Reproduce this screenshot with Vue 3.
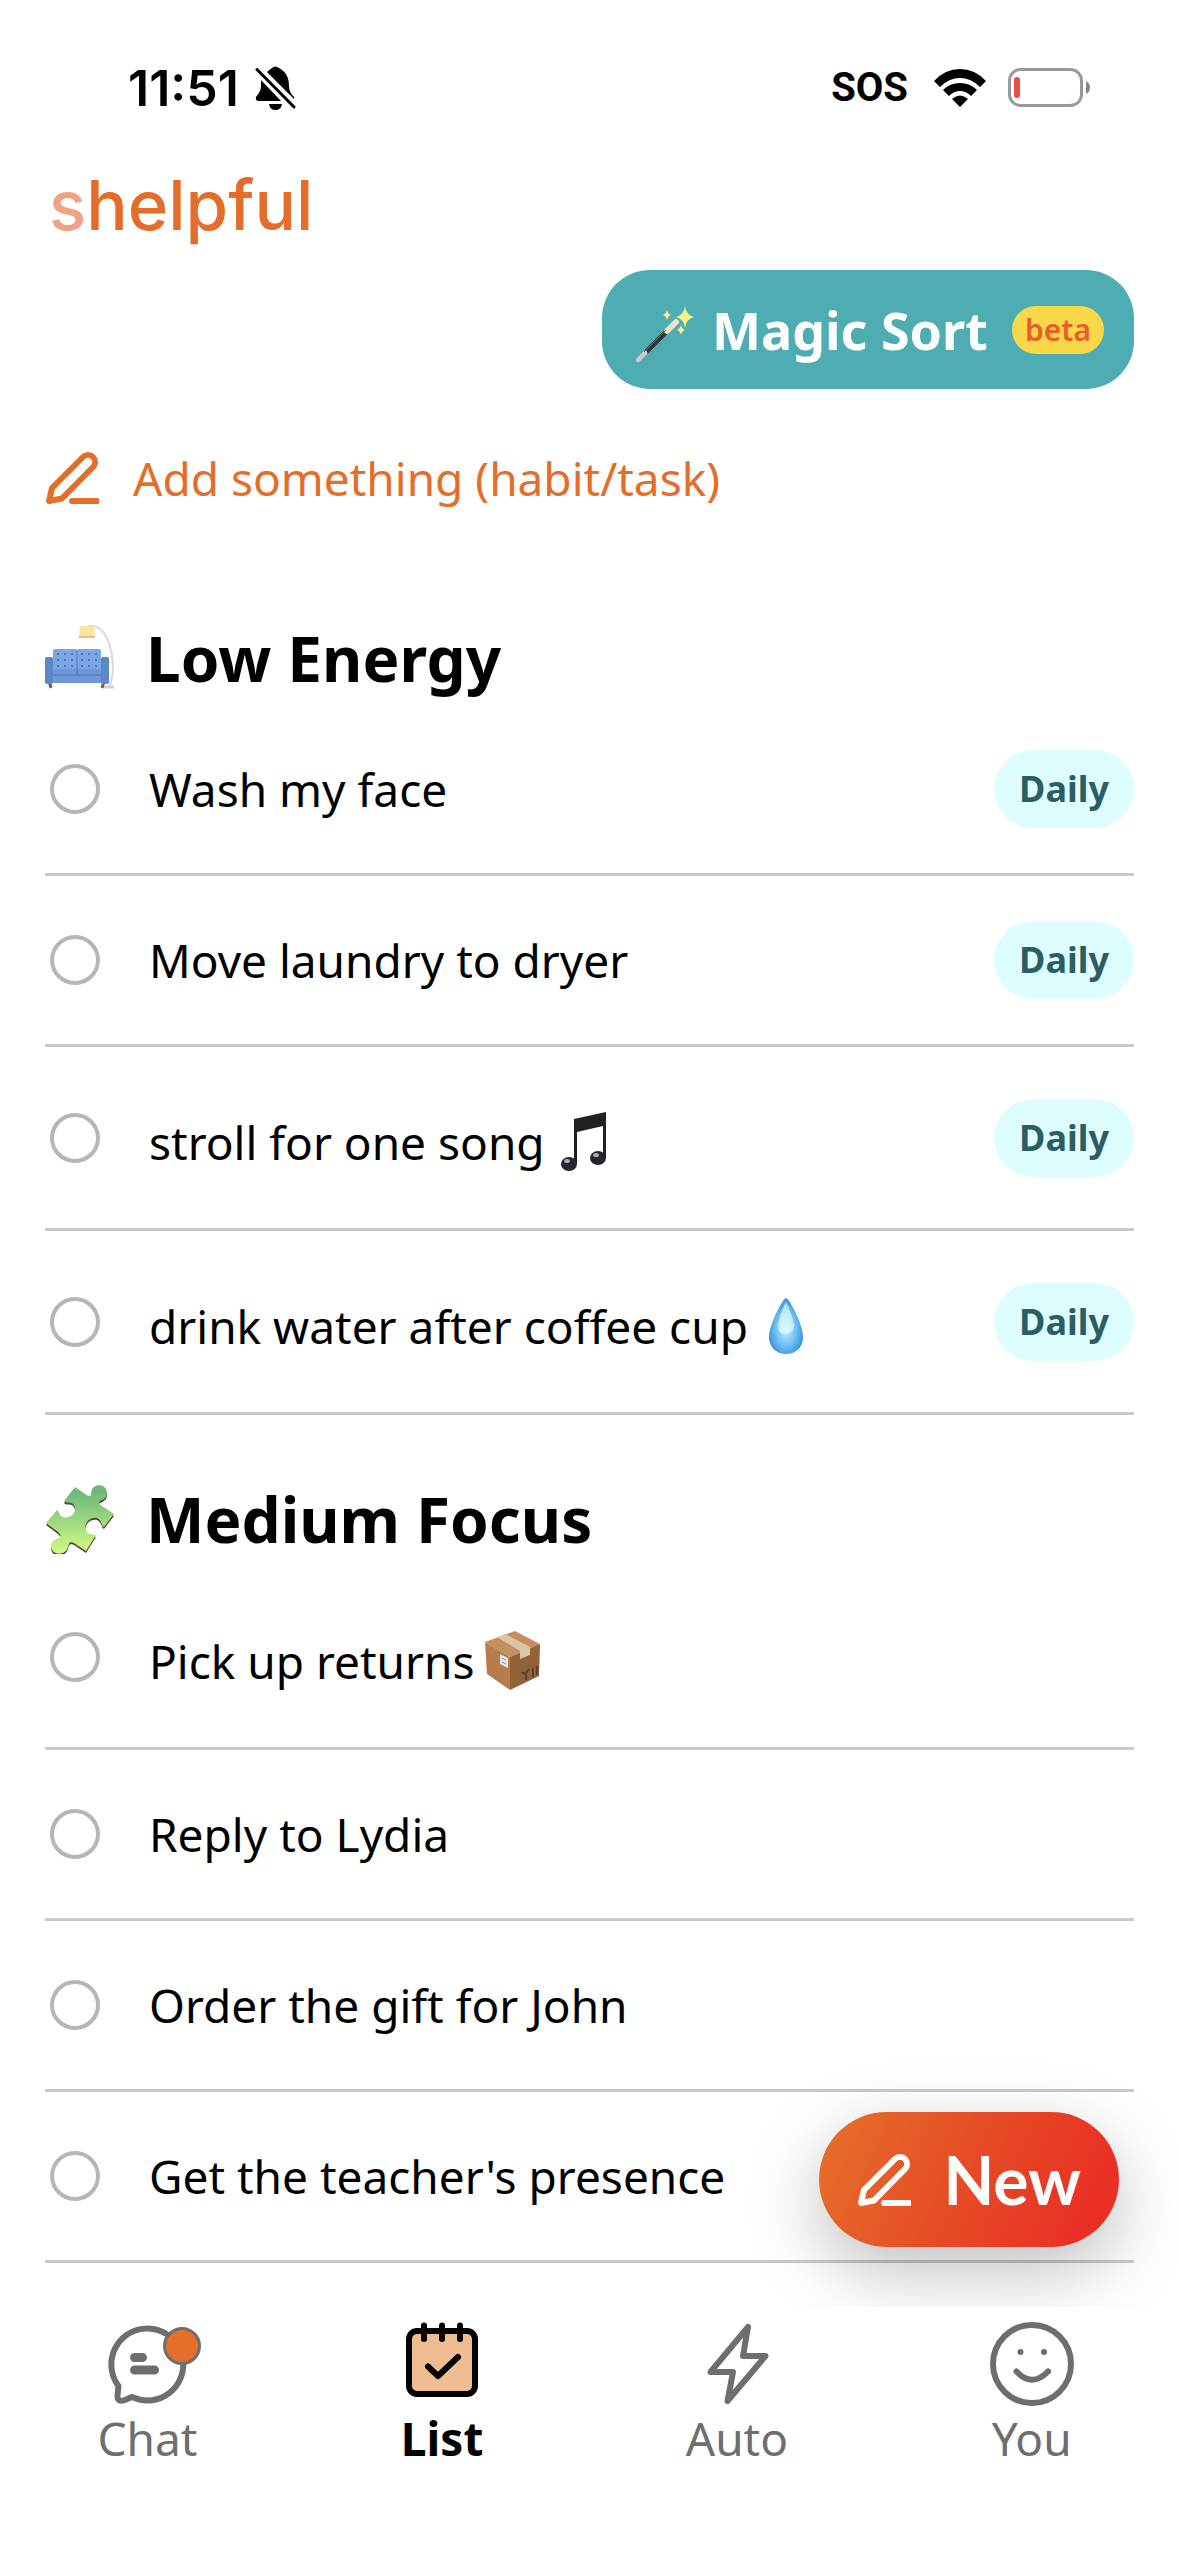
<script setup>
import { ref } from 'vue'

const sections = ref([
  {
    title: 'Low Energy',
    icon: 'sofa',
    tasks: [
      { id: 'wash', text: 'Wash my face', tag: 'Daily', done: false },
      { id: 'laundry', text: 'Move laundry to dryer', tag: 'Daily', done: false },
      { id: 'stroll', text: 'stroll for one song', emoji: 'notes', tag: 'Daily', done: false },
      { id: 'water', text: 'drink water after coffee cup', emoji: 'drop', tag: 'Daily', done: false },
    ],
  },
  {
    title: 'Medium Focus',
    icon: 'puzzle',
    tasks: [
      { id: 'returns', text: 'Pick up returns', emoji: 'box', done: false },
      { id: 'reply', text: 'Reply to Lydia', done: false },
      { id: 'gift', text: 'Order the gift for John', done: false },
      { id: 'teacher', text: "Get the teacher's presence", done: false },
    ],
  },
])

const tabs = [
  { name: 'Chat' },
  { name: 'List', active: true },
  { name: 'Auto' },
  { name: 'You' },
]
</script>

<template>
  <div class="app">
    <div class="screen">
      <header class="status">
        <span class="time">11:51</span>
        <svg class="bell" viewBox="0 0 42 44" width="42" height="44" aria-hidden="true">
          <path d="M12 6C14 4 16 3 17 2Q20 -1 24 2C31 6 34 11 34 20C34 25 36 28 39 31V33Z" />
          <path d="M6 14L26 35H4Q0 35 1 31C4 27 6 25 6 19Z" />
          <path d="M14 38H27Q26 44 20.500 44T14 38Z" />
          <path d="M2 3.500L39 41" fill="none" stroke="#000" stroke-width="3" stroke-linecap="round" />
        </svg>
        <span class="sos">SOS</span>
        <svg class="wifi" viewBox="0 0 52 38" width="52" height="38" aria-hidden="true">
          <path d="M0 12Q11 0 26 0T52 12L46 18Q37 9 26 9T6 18Z" />
          <path d="M9 21Q16 14 26 14T43 21L37 27Q32 22 26 22T15 27Z" />
          <path d="M18 30Q26 23 34 30L26 38Z" />
        </svg>
        <svg class="battery" viewBox="0 0 84 40" width="84" height="40" aria-hidden="true">
          <rect x="1.500" y="1.500" width="72" height="36" rx="11" fill="none" stroke="#999" stroke-width="3" />
          <rect x="6" y="9" width="6" height="21" rx="3" fill="#ee4b45" />
          <path d="M78 13Q82 15 82 19.500T78 26Z" fill="#888" />
        </svg>
      </header>

      <main class="content">
        <h1 class="logo"><span>s</span>helpful</h1>

        <button class="magic" type="button">
          <svg viewBox="0 0 62 58" width="62" height="58" aria-hidden="true">
            <path d="M4 54L42 16" stroke="#353535" stroke-width="5" stroke-linecap="round" />
            <path d="M4 54L11 47" stroke="#c9c9cf" stroke-width="5" stroke-linecap="round" />
            <path d="M33 25L42 16" stroke="#f2e2bd" stroke-width="6" stroke-linecap="round" />
            <path d="M10 46L32 24" stroke="#6b6b6b" stroke-width="1" />
            <path d="M51 0Q52 9 60 11Q52 13 51 22Q50 13 42 11Q50 9 51 0ZM33 4Q34 8 37 9Q34 10 33 14Q32 10 29 9Q32 8 33 4ZM47 19Q48 23 51 24Q48 25 47 29Q46 25 43 24Q46 23 47 19Z" fill="#fdf38a" />
          </svg>
          <span class="magic-label">Magic Sort</span>
          <span class="beta">beta</span>
        </button>

        <button class="add" type="button">
          <svg viewBox="0 0 54 54" width="54" height="54" aria-hidden="true">
            <path d="M4 50L7 37L38 6A7 7 0 0 1 48 16L17 47.500Z M27 50H52" />
          </svg>
          <span>Add something (habit/task)</span>
        </button>

        <section v-for="section in sections" :key="section.title" class="group">
          <h2>
            <svg v-if="section.icon === 'sofa'" viewBox="0 0 70 70" width="70" height="70" aria-hidden="true">
              <path d="M43 3C60 1 68 22 68 48Q67 58 64 64" fill="none" stroke="#d9d9d9" stroke-width="2" />
              <path d="M59 64H69" stroke="#cfcfcf" stroke-width="3" />
              <path d="M35 3H49L50 15H34Z" fill="#fbe3a4" />
              <path d="M34 14H50" stroke="#e3c27c" stroke-width="2" />
              <path d="M4 58L6 65M59 58L57 65" stroke="#85563c" stroke-width="3" />
              <rect x="8" y="26" width="24" height="26" rx="2" fill="#7ba5e3" />
              <rect x="32" y="26" width="24" height="26" rx="2" fill="#7ba5e3" />
              <path d="M12 31H29M12 37H29M12 43H29M36 31H53M36 37H53M36 43H53" stroke="#4f77b4" stroke-width="2" stroke-dasharray="2 5" />
              <path d="M32 27V50" stroke="#5580c0" stroke-width="1" />
              <rect x="7" y="46" width="50" height="14" fill="#6c97d8" />
              <path d="M7 52H57M32 46V52" stroke="#4b73b0" stroke-width="1" />
              <rect x="0" y="34" width="8" height="27" rx="2" fill="#5c88cb" />
              <rect x="56" y="34" width="8" height="27" rx="2" fill="#5c88cb" />
            </svg>
            <svg v-else viewBox="0 0 70 70" width="70" height="70" aria-hidden="true">
              <defs>
                <linearGradient id="puzzleFill" x1="0" y1="0" x2="0" y2="1">
                  <stop offset="0.100" stop-color="#6fb87c" />
                  <stop offset="1" stop-color="#d3fb84" />
                </linearGradient>
                <path id="piece" d="M30 3L43 12C47 13 46 9 46.500 7C48 -1 62 -1 62 9C62 14 58 16 55 17C53 19 55 21 57 22L69 30L59 43C56 42 57 36 52 34C44 32 37 42 42 48C44 51 48 50 51 51L41 67L29 59C24 57 24 60 23 63C20 73 6 71 6 62C6 57 10 55 14 54C17 52 15 50 13 48L1 39L12 26C15 28 14 33 20 33.500C29 34 33 24 28 20C25 17 21 20 19 17Z" />
              </defs>
              <use href="#piece" y="2" fill="#4d4a35" />
              <use href="#piece" fill="url(#puzzleFill)" />
            </svg>
            <span>{{ section.title }}</span>
          </h2>

          <ul>
            <li v-for="task in section.tasks" :key="task.id" :class="{ tall: task.emoji }">
              <input :id="task.id" v-model="task.done" type="checkbox" />
              <label :for="task.id">
                <span>{{ task.text }}</span>
                <svg v-if="task.emoji === 'notes'" viewBox="0 0 60 60" width="60" height="60" aria-hidden="true">
                  <path d="M21 7L53 0V46H50V14L24 20V52H21Z" fill="#231f22" />
                  <ellipse cx="16" cy="52" rx="8" ry="7" fill="#26272d" />
                  <ellipse cx="45" cy="46" rx="8" ry="7" fill="#26272d" />
                  <ellipse cx="14" cy="49" rx="3" ry="2" fill="#a9acb5" />
                  <ellipse cx="43" cy="43" rx="3" ry="2" fill="#a9acb5" />
                </svg>
                <svg v-else-if="task.emoji === 'drop'" viewBox="0 0 60 60" width="60" height="60" aria-hidden="true">
                  <defs>
                    <radialGradient id="dropFill" cx="0.500" cy="0.550" r="0.550">
                      <stop offset="0" stop-color="#c5f3fd" />
                      <stop offset="0.550" stop-color="#6fc0f3" />
                      <stop offset="1" stop-color="#368fd9" />
                    </radialGradient>
                  </defs>
                  <path d="M30 2C33 2 47 28 47 41C47 52 39 58 30 58S13 52 13 41C13 28 27 2 30 2Z" fill="url(#dropFill)" />
                  <path d="M30 6C31 8 38 22 38 31Q37 37 30 38T22 31C22 22 29 8 30 6Z" fill="#e3fbff" opacity="0.700" />
                </svg>
                <svg v-else-if="task.emoji === 'box'" viewBox="0 0 60 60" width="60" height="60" aria-hidden="true">
                  <path d="M32 0L57 13L27 26L2 11Z" fill="#c48e5f" />
                  <path d="M2 11L27 26V59L4 43Z" fill="#b67c4b" />
                  <path d="M57 13L27 26V59L56 45Z" fill="#8f6238" />
                  <path d="M14 6L22 3L47 16V24L37 28V20Z" fill="#dcc5a5" />
                  <path d="M17 23L25 27V37L17 33Z" fill="#e8e8e8" />
                  <path d="M19 27L23 29M19 31L23 33" stroke="#8b8b8b" stroke-width="1" />
                  <path d="M39 41Q42 45 46 38M43 43V49M50 37V46M54 35V44" fill="none" stroke="#604022" stroke-width="2" />
                </svg>
              </label>
              <span v-if="task.tag" class="tag">{{ task.tag }}</span>
            </li>
          </ul>
        </section>
      </main>

      <button class="fab" type="button">
        <svg viewBox="0 0 54 54" width="54" height="54" aria-hidden="true">
          <path d="M4 50L7 37L38 6A7 7 0 0 1 48 16L17 47.500Z M27 50H52" />
        </svg>
        <span>New</span>
      </button>
    </div>

    <nav class="tabs">
      <a v-for="tab in tabs" :key="tab.name" href="#" :class="{ active: tab.active }">
        <svg viewBox="0 0 110 84" width="110" height="84" aria-hidden="true">
          <g v-if="tab.name === 'Chat'">
            <path d="M26.500 64A36 36 0 1 1 40 75L33 78Q25 81 25.500 73Z" />
            <path d="M42.500 35.500H50.500M42.500 48H62.500" stroke-width="9" />
            <circle cx="90" cy="24" r="17.500" fill="#e56d2a" stroke-width="3" />
          </g>
          <g v-else-if="tab.name === 'List'">
            <rect x="22" y="9" width="66" height="63" rx="8" fill="#f0bc92" />
            <path d="M37 3.500V17M55 3.500V17M73 3.500V17M41 44.500L51 54L71 35" />
          </g>
          <path v-else-if="tab.name === 'Auto'" d="M66 5L61 34H83.500L45.500 79L51 50H28.500Z" />
          <g v-else>
            <circle cx="55" cy="42" r="39" />
            <path d="M39.500 49.500Q55 66 71 49.500" />
            <circle cx="43.500" cy="30" r="3" fill="currentColor" stroke="none" />
            <circle cx="67" cy="30" r="3" fill="currentColor" stroke="none" />
          </g>
        </svg>
        <span>{{ tab.name }}</span>
      </a>
    </nav>
  </div>
</template>

<style>
body {
  margin: 0;
  background: #fff;
}
</style>

<style scoped>
.app {
  display: flex;
  flex-direction: column;
  min-height: 100vh;
  background: #fff;
  color: #000;
  font-family: "Noto Sans", sans-serif;
  font-size: 46px;
  line-height: 60px;
}

svg {
  display: block;
  flex: none;
}

button {
  border: 0;
  background: none;
  font: inherit;
  cursor: pointer;
}

.screen {
  position: relative;
  flex: 1;
  overflow: hidden;
}

.status {
  display: flex;
  align-items: center;
  height: 60px;
  padding: 58px 87px 0 128px;
}

.time {
  font-family: Inter, sans-serif;
  font-size: 50px;
  font-weight: 600;
}

.bell {
  margin-left: 16px;
}

.sos {
  margin-left: auto;
  font-family: Roboto, sans-serif;
  font-size: 40px;
  font-weight: 700;
}

.wifi {
  margin-left: 26px;
}

.battery {
  margin-left: 22px;
}

.content {
  display: flex;
  flex-direction: column;
  padding: 0 45px;
}

.logo {
  margin: 53px 0 0 4px;
  color: #e56d2a;
  font-family: Inter, sans-serif;
  font-size: 69px;
  font-weight: 500;
  line-height: 68px;
}

.logo span {
  color: #f1a184;
}

.magic {
  display: flex;
  align-items: center;
  align-self: flex-end;
  height: 119px;
  margin-top: 31px;
  padding: 0 30px 0 32px;
  border-radius: 48px;
  background: #4eadb3;
  color: #fff;
}

.magic svg {
  margin-top: 10px;
}

.magic-label {
  margin: 0 24px 0 16px;
  font-size: 52px;
  font-weight: 700;
}

.beta {
  padding: 0 13px;
  border-radius: 24px;
  background: #f8d748;
  color: #f05a28;
  font-size: 30px;
  font-weight: 600;
  line-height: 48px;
}

.add {
  display: flex;
  align-items: center;
  align-self: flex-start;
  gap: 34px;
  height: 72px;
  margin: 53px 0 40px;
  padding: 0;
  color: #e56d2a;
}

.add svg,
.fab svg {
  fill: none;
  stroke: currentColor;
  stroke-width: 6;
  stroke-linecap: round;
  stroke-linejoin: round;
}

.group {
  margin-top: 57px;
}

h2 {
  display: flex;
  align-items: center;
  gap: 31px;
  height: 94px;
  margin: 0;
  font-size: 62px;
  font-weight: 700;
}

ul {
  margin: 0;
  padding: 0;
  list-style: none;
}

li {
  display: flex;
  align-items: center;
  height: 168px;
  padding-left: 5px;
  border-bottom: 3px solid #c9c9c9;
}

li.tall {
  height: 181px;
}

li input {
  flex: none;
  width: 50px;
  height: 50px;
  margin: 0;
  border: 4px solid #b5b6b8;
  border-radius: 50%;
  appearance: none;
}

li input:checked {
  background: #4eadb3;
}

label {
  display: flex;
  flex: 1;
  align-items: center;
  gap: 8px;
  margin-left: 49px;
}

.tall label {
  padding-top: 8px;
}

.tag {
  padding: 0 25px;
  border-radius: 39px;
  background: #ddfdff;
  color: #2b5e63;
  font-size: 36px;
  font-weight: 700;
  line-height: 78px;
}

.fab {
  position: absolute;
  right: 60px;
  bottom: 60px;
  display: flex;
  align-items: center;
  gap: 32px;
  height: 135px;
  padding: 0 38px;
  border-radius: 68px;
  background: linear-gradient(115deg, #e56d2a 5%, #e73f24 65%, #ea2f24 90%);
  box-shadow: 0 24px 72px rgba(0, 0, 0, 0.25);
  color: #fff;
  font-family: Lato, sans-serif;
  font-size: 66px;
  font-weight: 700;
}

.tabs {
  display: grid;
  grid-template-columns: repeat(4, 1fr);
  height: 234px;
  padding-top: 15px;
}

.tabs a {
  display: flex;
  flex-direction: column;
  align-items: center;
  gap: 2px;
  color: #6d6e70;
  text-decoration: none;
}

.tabs a.active {
  color: #000;
  font-weight: 700;
}

.tabs svg {
  fill: none;
  stroke: currentColor;
  stroke-width: 6;
  stroke-linecap: round;
  stroke-linejoin: round;
}
</style>
